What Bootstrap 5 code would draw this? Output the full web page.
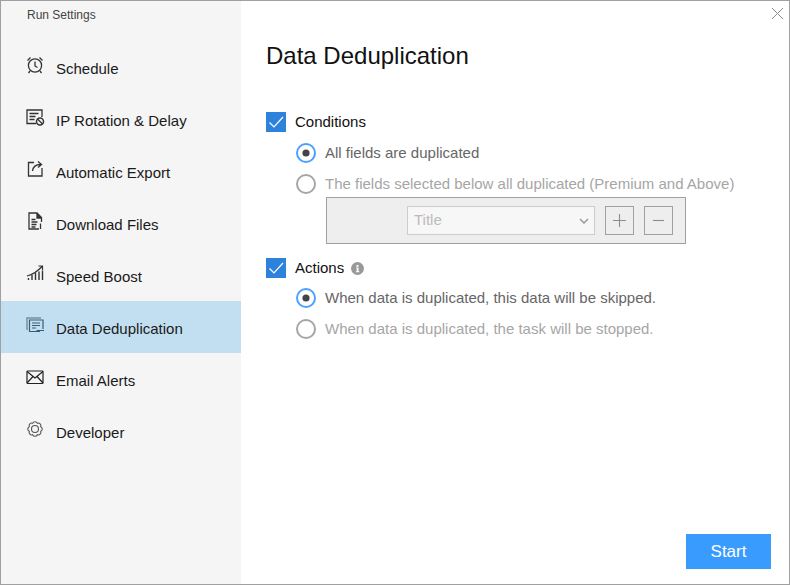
<!DOCTYPE html>
<html lang="en"><head><meta charset="utf-8"><title>Run Settings</title>
<link rel="stylesheet" href="https://cdn.jsdelivr.net/npm/bootstrap@5.3.0/dist/css/bootstrap.min.css">
<style>
html,body{height:100%;margin:0;background:#fff;font-family:"Liberation Sans",Arial,sans-serif;}
.win{width:790px;height:585px;border:1px solid #a0a0a0;position:relative;overflow:hidden;color:#1a1a1a;}
.side{width:240px;background:#f5f5f5;flex:none;}
.side-title{font-size:12px;line-height:14px;color:#444;padding:7px 0 19px 26px;}
.side-item{height:52px;padding:4px 0 0 25px;font-size:15px;color:#1a1a1a;gap:10px;}
.side-item svg{width:20px;height:20px;flex:none;margin:-9px 1.5px 0 -1.5px;}
.side-item.on{background:#c2dff2;}
.main-pane{padding:0 18px 15px 25px;}
.ttl{font-size:24px;font-weight:400;line-height:28px;margin:41px 0 0;color:#111;}
.chk-row{height:20px;font-size:15px;color:#111;gap:9px;}
.chk-gap1{margin-top:42px;}
.chk-gap2{margin-top:14px;}
.form-check-input.cb{width:20px;height:20px;margin:0;border-radius:0;background-color:#2d82dc;border:0;opacity:1;
background-image:url("data:image/svg+xml,%3csvg xmlns='http://www.w3.org/2000/svg' viewBox='0 0 20 20'%3e%3cpath fill='none' stroke='%23fff' stroke-width='1.2' d='M3.500 10.500l4.500 4.500 9-10'/%3e%3c/svg%3e");background-size:20px 20px;}
.rad-row{height:20px;font-size:15px;gap:9px;padding-left:30px;color:#666;margin-top:11px;}
.rad-row.first{margin-top:10px;}
.rad-row.off{color:#a6a6a6;}
.form-check-input.rd{width:20px;height:20px;margin:0;background-color:#fff;border:2px solid #4da0ff;opacity:1;
background-image:url("data:image/svg+xml,%3csvg xmlns='http://www.w3.org/2000/svg' viewBox='0 0 16 16'%3e%3ccircle cx='8' cy='8' r='3.600' fill='%23444'/%3e%3c/svg%3e");background-size:16px 16px;}
.form-check-input.rd:not(:checked){border-color:#a6a6a6;background-image:none;}
.fld-box{margin:3px 0 0 60px;width:360px;height:47px;background:#eee;border:1px solid #a0a0a0;padding:8px 12px 0 80px;gap:10px;}
.form-select.fld{width:188px;height:29px;padding:0 24px 0 6px;border-radius:0;border:1px solid #ccc;background-color:#f7f7f7;color:#bbb;font-size:15px;flex:none;opacity:1;
background-image:url("data:image/svg+xml,%3csvg xmlns='http://www.w3.org/2000/svg' viewBox='0 0 10 6'%3e%3cpath fill='none' stroke='%23999' stroke-width='1.500' d='M1 1l4 4 4-4'/%3e%3c/svg%3e");background-size:10px 6px;background-position:right 5px center;}
.sq{width:29px;height:29px;padding:0;border-radius:0;flex:none;}
.sq svg{display:block;margin:auto;}
.sq-add svg{width:13px;height:13px;}
.sq-del svg{width:11px;height:11px;}
.sq:disabled{border:1px solid #a0a0a0;color:#8c8c8c;background:transparent;opacity:1;}
.inf{width:13px;height:13px;margin-left:-2px;}
.go{width:85px;height:35px;border-radius:0;border:0;background:#3a9bff;color:#fff;font-size:17px;padding:0;}
.go:hover{background:#3a9bff;color:#fff;}
.x-btn{position:absolute;top:6px;right:5px;width:13px;height:13px;display:block;}
</style></head>
<body>
<div class="win d-flex">
  <div class="side d-flex flex-column">
    <div class="side-title">Run Settings</div>
    <div class="side-item d-flex align-items-center"><svg viewBox="0 0 20 20" fill="none" stroke="#333" stroke-width="1.300"><circle cx="10" cy="10.500" r="6.600"/><path d="M10 6.500v4.500l2.500 1.500M2.500 5.500l3-3M17.500 5.500l-3-3M5 16l-1.500 2M15 16l1.500 2"/></svg><span>Schedule</span></div>
    <div class="side-item d-flex align-items-center"><svg viewBox="0 0 20 20" fill="none" stroke="#333" stroke-width="1.300"><path d="M11 16.500H2V3h15v7"/><path d="M4.500 6.500h9M4.500 9.500h6M4.500 12.500h5"/><circle cx="15" cy="14.500" r="3.500" stroke-width="1.500"/><path d="M12.500 12l5 5"/></svg><span>IP Rotation &amp; Delay</span></div>
    <div class="side-item d-flex align-items-center"><svg viewBox="0 0 20 20" fill="none" stroke="#333" stroke-width="1.300"><path d="M9 3.500H3.500v13.500h13.500V9"/><path d="M7.500 12c.5-4 3-6.500 8-6.500M13 2.500l3.500 3-3.500 3"/></svg><span>Automatic Export</span></div>
    <div class="side-item d-flex align-items-center"><svg viewBox="0 0 20 20" fill="none" stroke="#333" stroke-width="1.300"><path d="M14 18H4V2h8l4.500 4.500V11"/><path d="M12 2v5h4.500" fill="#333"/><path d="M6.500 8.500h4M6.500 11h6M6.500 13.500h5M6.500 16h4M15.500 12.500v5.500"/></svg><span>Download Files</span></div>
    <div class="side-item d-flex align-items-center"><svg viewBox="0 0 20 20" fill="none" stroke="#333" stroke-width="1.200"><path d="M2 13c4-1 10-4 15-9.500M13.500 3H17.500V7"/><path d="M3.500 17v-2M7 17v-5M10.500 17v-7M14 17V8.500M17.500 17V7.500" stroke-width="1.400"/></svg><span>Speed Boost</span></div>
    <div class="side-item on d-flex align-items-center"><svg viewBox="0 0 20 20" fill="none" stroke="#3b5a75" stroke-width="1.200"><path d="M2 15V3h14" stroke="#7c8d9c" stroke-width="1.500"/><path d="M15 16.500H4.500V5H18v9"/><path d="M7 8h8M7 10.500h8M7 13h4M11.500 15.500H19"/></svg><span>Data Deduplication</span></div>
    <div class="side-item d-flex align-items-center"><svg viewBox="0 0 20 20" fill="none" stroke="#222" stroke-width="1.200"><rect x="2" y="4" width="16" height="12.500" rx=".8"/><path d="M2 4.500l8 6.500 8-6.500M2 16l6-6.500M18 16l-6-6.500"/></svg><span>Email Alerts</span></div>
    <div class="side-item d-flex align-items-center"><svg viewBox="0 0 20 20" fill="none" stroke="#555" stroke-width="1.100"><path d="M15.730 12.370A2.600 2.600 0 0 1 12.370 15.730A2.600 2.600 0 0 1 7.630 15.730A2.600 2.600 0 0 1 4.270 12.370A2.600 2.600 0 0 1 4.270 7.630A2.600 2.600 0 0 1 7.630 4.270A2.600 2.600 0 0 1 12.370 4.270A2.600 2.600 0 0 1 15.730 7.630A2.600 2.600 0 0 1 15.730 12.370z"/><circle cx="10" cy="10" r="3.500"/></svg><span>Developer</span></div>
  </div>
  <div class="main-pane flex-grow-1 d-flex flex-column">
    <h1 class="ttl">Data Deduplication</h1>
    <div class="chk-row chk-gap1 d-flex align-items-center"><input class="form-check-input cb" type="checkbox" checked aria-label="Conditions"><span>Conditions</span></div>
    <div class="rad-row d-flex align-items-center"><input class="form-check-input rd" type="radio" name="c" checked aria-label="All fields"><span>All fields are duplicated</span></div>
    <div class="rad-row off d-flex align-items-center"><input class="form-check-input rd" type="radio" name="c" aria-label="Selected fields"><span>The fields selected below all duplicated (Premium and Above)</span></div>
    <div class="fld-box d-flex">
      <select class="form-select fld" disabled aria-label="Field"><option>Title</option></select>
      <button class="btn sq sq-add" type="button" disabled aria-label="Add"><svg viewBox="0 0 13 13" stroke="currentColor" stroke-width="1.100"><path d="M6.500 0v13M0 6.500h13"/></svg></button>
      <button class="btn sq sq-del" type="button" disabled aria-label="Remove"><svg viewBox="0 0 11 11" stroke="currentColor" stroke-width="1.100"><path d="M0 5.500h11"/></svg></button>
    </div>
    <div class="chk-row chk-gap2 d-flex align-items-center"><input class="form-check-input cb" type="checkbox" checked aria-label="Actions"><span>Actions</span><svg class="inf" viewBox="0 0 13 13"><circle cx="6.500" cy="6.500" r="6.500" fill="#999"/><path d="M5.500 3h2v1.700h-2zM5.200 5.500h2.300v3.700h.8v1H4.900v-1h.8V6.500h-.5z" fill="#fff"/></svg></div>
    <div class="rad-row first d-flex align-items-center"><input class="form-check-input rd" type="radio" name="a" checked aria-label="Skip"><span>When data is duplicated, this data will be skipped.</span></div>
    <div class="rad-row off d-flex align-items-center"><input class="form-check-input rd" type="radio" name="a" aria-label="Stop"><span>When data is duplicated, the task will be stopped.</span></div>
    <div class="mt-auto d-flex justify-content-end"><button class="btn go" type="button">Start</button></div>
  </div>
  <svg class="x-btn" viewBox="0 0 13 13" stroke="#8a8a8a" stroke-width="1"><path d="M1 1l11 11M12 1L1 12"/></svg>
</div>
<script src="https://cdn.jsdelivr.net/npm/bootstrap@5.3.0/dist/js/bootstrap.bundle.min.js"></script>
</body></html>
